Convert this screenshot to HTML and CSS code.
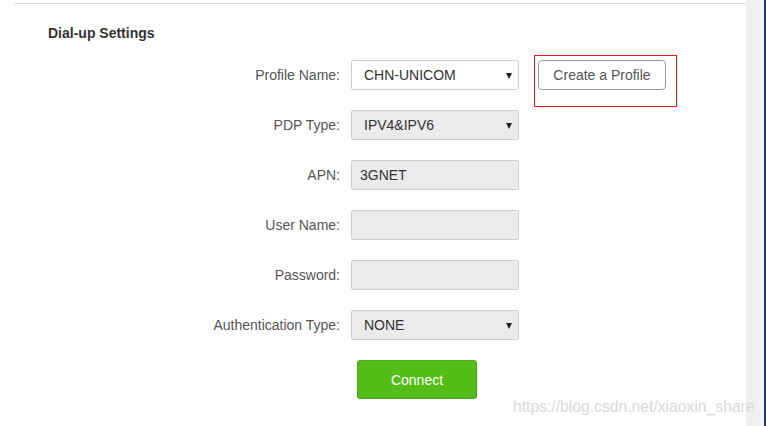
FILE: index.html
```html
<!DOCTYPE html>
<html>
<head>
<meta charset="utf-8">
<link rel="stylesheet" href="styles.css">
</head>
<body>
<div class="page">
  <div class="main">
    <div class="rule"></div>
    <div class="title">Dial-up Settings</div>
    <div class="form">
      <div class="row">
        <div class="label">Profile Name:</div>
        <div class="field select white">CHN-UNICOM<span class="arrow"></span></div>
        <div class="create-wrap"><button class="btn-create">Create a Profile</button></div>
      </div>
      <div class="row">
        <div class="label">PDP Type:</div>
        <div class="field select">IPV4&amp;IPV6<span class="arrow"></span></div>
      </div>
      <div class="row">
        <div class="label">APN:</div>
        <div class="field input">3GNET</div>
      </div>
      <div class="row">
        <div class="label">User Name:</div>
        <div class="field input"></div>
      </div>
      <div class="row">
        <div class="label">Password:</div>
        <div class="field input"></div>
      </div>
      <div class="row">
        <div class="label">Authentication Type:</div>
        <div class="field select">NONE<span class="arrow"></span></div>
      </div>
      <div class="actions">
        <button class="btn-connect">Connect</button>
      </div>
    </div>
  </div>
  <div class="strip"></div>
  <div class="edge"></div>
  <div class="watermark">https://blog.csdn.net/xiaoxin_share</div>
</div>
</body>
</html>
```
FILE: styles.css
```css
html, body {
  margin: 0;
  padding: 0;
  background: #fff;
}
body {
  font-family: "Liberation Sans", Arial, sans-serif;
  color: #333;
}
.page {
  display: flex;
  height: 426px;
  position: relative;
  overflow: hidden;
}
.main {
  flex: 0 0 746px;
  padding-top: 3px;
  box-sizing: border-box;
}
.strip {
  flex: 0 0 18px;
  background: #f0f0f0;
}
.edge {
  flex: 0 0 2px;
  background: #1d3a66;
}
.rule {
  margin-left: 14px;
  border-top: 1px solid #dcdcdc;
}
.title {
  margin: 19px 0 0 48px;
  font-size: 14px;
  font-weight: bold;
  line-height: 20px;
  color: #333;
}
.form {
  margin-top: 17px;
}
.row {
  display: flex;
  align-items: center;
  height: 30px;
  margin-bottom: 20px;
}
.label {
  width: 340px;
  text-align: right;
  font-size: 14px;
  color: #555;
  flex: none;
}
.field {
  flex: none;
  margin-left: 11px;
  width: 168px;
  height: 30px;
  box-sizing: border-box;
  border: 1px solid #cfcfcf;
  border-radius: 2px;
  background: #ebebeb;
  font-size: 14px;
  line-height: 28px;
  color: #333;
  position: relative;
}
.select {
  padding-left: 12px;
}
.input {
  padding-left: 8px;
}
.white {
  background: #fff;
}
.arrow {
  position: absolute;
  right: 6px;
  top: 12px;
  width: 0;
  height: 0;
  border-left: 3.5px solid transparent;
  border-right: 3.5px solid transparent;
  border-top: 6px solid #222;
}
.create-wrap {
  position: relative;
  margin-left: 19px;
}
.create-wrap::after {
  content: "";
  position: absolute;
  left: -4px;
  top: -5px;
  width: 141px;
  height: 50px;
  border: 1px solid #e8141c;
}
.btn-create {
  display: block;
  width: 128px;
  height: 30px;
  border: 1px solid #9a9a9a;
  border-radius: 4px;
  background: #fff;
  font-family: "Liberation Sans", Arial, sans-serif;
  font-size: 14px;
  color: #555;
  padding: 0;
}
.actions {
  padding-left: 357px;
}
.btn-connect {
  display: block;
  width: 120px;
  height: 39px;
  border: 1px solid #4aa814;
  border-radius: 3px;
  background: #55bd17;
  color: #fff;
  font-family: "Liberation Sans", Arial, sans-serif;
  font-size: 14px;
  padding: 0;
}
.watermark {
  position: absolute;
  left: 513px;
  top: 397px;
  font-size: 15.7px;
  line-height: 20px;
  color: #d9d9d9;
  white-space: nowrap;
}
```
